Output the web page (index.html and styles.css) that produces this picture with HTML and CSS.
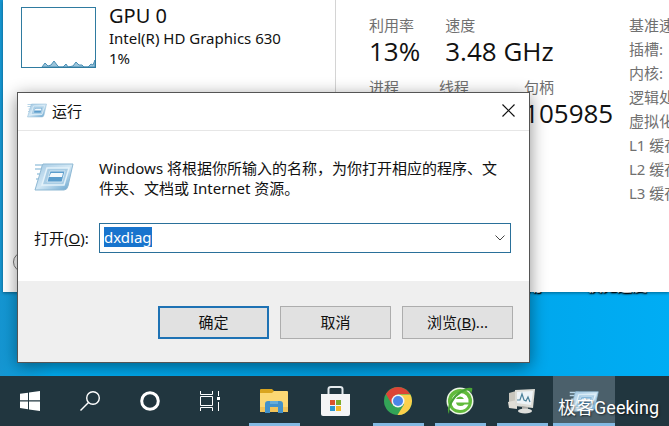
FILE: index.html
```
<!DOCTYPE html>
<html lang="zh-CN">
<head>
  <meta charset="UTF-8">
  <meta name="viewport" content="width=device-width, initial-scale=1">
  <title>运行</title>
  <link rel="stylesheet" href="styles.css">
</head>
<body>

<!-- shared gradient + icon for the run dialog -->
<svg class="defs" width="0" height="0" aria-hidden="true">
  <defs>
    <linearGradient id="runFill" x1="0" y1="0" x2="1" y2="1">
      <stop offset="0" stop-color="#9fc6e2"/>
      <stop offset="0.5" stop-color="#d3e8f5"/>
      <stop offset="1" stop-color="#5f9fcb"/>
    </linearGradient>
    <symbol id="run" viewBox="0 0 40 30">
      <path d="M1 3H13M1 7H11M3 12H9M2 17H8" stroke="#b9d6e8" stroke-width="2"/>
      <path d="M9 2H39L34 24Q33 28 30 28H1L7 8Q8 3 9 2Z" fill="url(#runFill)" stroke="#8fb9d4"/>
      <path d="M13 6H35L30 23H8Z" fill="#a9cde5" stroke="#e4f2fa" stroke-width="1.5"/>
      <path d="M16 9H31L28 20H13Z" fill="#5c9dcc" stroke="#cfe4f2"/>
      <path d="M17 11H29L28 15H15Z" fill="#f4f9fc"/>
    </symbol>
  </defs>
</svg>

<main class="desktop">
  <span class="desktop-label label-a">应用</span>
  <span class="desktop-label label-b">快充速度</span>

  <section class="task-manager">
    <aside class="sidebar">
      <svg class="gpu-graph" viewBox="0 0 75 61" aria-hidden="true">
        <path d="M21 60L24 56L27 59L30 58L33 54L36 58L38 60L42 60L45 57L47 60L52 59L55 55L58 58L61 58L63 60L67 60L70 57L72 58L74 53V60Z" fill="#9cc4da" stroke="#4a8fb5"/>
        <rect x="0.5" y="0.5" width="74" height="60" fill="none" stroke="#2f7ba0"/>
      </svg>
      <div class="gpu-info">
        <h2>GPU 0</h2>
        <p>Intel(R) HD Graphics 630</p>
        <p>1%</p>
      </div>
      <span class="toggle-circle"></span>
    </aside>
    <div class="cpu">
      <div class="stats">
        <dl class="stat-row">
          <div><dt>利用率</dt><dd>13%</dd></div>
          <div><dt>速度</dt><dd>3.48 GHz</dd></div>
        </dl>
        <dl class="stat-row second">
          <div><dt>进程</dt><dd></dd></div>
          <div><dt>线程</dt><dd></dd></div>
          <div><dt>句柄</dt><dd>105985</dd></div>
        </dl>
      </div>
      <ul class="specs">
        <li>基准速度:</li>
        <li>插槽:</li>
        <li>内核:</li>
        <li>逻辑处理器:</li>
        <li>虚拟化:</li>
        <li>L1 缓存:</li>
        <li>L2 缓存:</li>
        <li>L3 缓存:</li>
      </ul>
    </div>
  </section>

  <form class="run-dialog" onsubmit="return false">
    <header class="titlebar">
      <svg class="title-icon"><use href="#run"/></svg>
      <h1>运行</h1>
      <button type="button" class="close" aria-label="关闭">
        <svg viewBox="0 0 13 13"><path d="M0.5 0.5L12.5 12.5M12.5 0.5L0.5 12.5" stroke="#111" stroke-width="1.2"/></svg>
      </button>
    </header>
    <div class="dialog-body">
      <div class="message">
        <svg class="message-icon"><use href="#run"/></svg>
        <p>Windows 将根据你所输入的名称，为你打开相应的程序、文件夹、文档或 Internet 资源。</p>
      </div>
      <div class="open-row">
        <label for="command">打开(<u>O</u>):</label>
        <div class="combo">
          <input type="text" id="command" value="dxdiag" spellcheck="false" autocomplete="off">
          <button type="button" class="drop" aria-label="历史记录">
            <svg viewBox="0 0 10 6"><path d="M0.5 0.5L5 5L9.5 0.5" fill="none" stroke="#444"/></svg>
          </button>
        </div>
      </div>
    </div>
    <footer class="actions">
      <button type="submit" class="default">确定</button>
      <button type="button">取消</button>
      <button type="button">浏览(<u>B</u>)...</button>
    </footer>
  </form>
</main>

<nav class="taskbar">
  <div class="system">
    <button aria-label="开始">
      <svg width="20" height="20" viewBox="0 0 20 20" fill="#fff"><path d="M0 2.8L8 1.7V9.3H0ZM9 1.5L20 0V9.3H9ZM0 10.5H8V18.2L0 17.1ZM9 10.5H20V20L9 18.4Z"/></svg>
    </button>
    <button aria-label="搜索">
      <svg width="20" height="20" viewBox="0 0 20 20" fill="none" stroke="#fff" stroke-width="1.4"><circle cx="13" cy="7" r="6.3"/><path d="M8.5 11.5L0.5 19.5"/></svg>
    </button>
    <button aria-label="Cortana">
      <svg width="20" height="20" viewBox="0 0 20 20"><circle cx="10" cy="10" r="8.3" fill="none" stroke="#fff" stroke-width="3"/></svg>
    </button>
    <button aria-label="任务视图">
      <svg width="20" height="20" viewBox="0 0 20 20" fill="none" stroke="#fff"><path d="M0.5 0V3.5H12.5V0M0.5 5.5H12.5V14.5H0.5ZM0.5 20V16.5H12.5V20M18.5 0V5M18.5 11V20"/><path d="M17 6H20V9H17Z" fill="#fff" stroke="none"/></svg>
    </button>
  </div>
  <div class="apps">
    <button class="running" aria-label="文件资源管理器">
      <svg width="28" height="25" viewBox="0 0 28 25"><path d="M0 1Q0 0 1 0H12L14 2V5H0Z" fill="#d9a520"/><path d="M0 4H12L14 2H27Q28 2 28 3V23H0Z" fill="#fbd874"/><path d="M0 18H28V23H0Z" fill="#f2c459"/><path d="M5 24V15Q5 12 8 12H20Q23 12 23 15V24H18V18H10V24Z" fill="#4292cb"/><path d="M10 12H18V15H10Z" fill="#65acd9"/></svg>
    </button>
    <button aria-label="Microsoft Store">
      <svg width="30" height="30" viewBox="0 0 30 30"><path d="M7.500 9V3Q7.500 1 10 1H19Q21.500 1 21.500 3V9" fill="none" stroke="#e4eaee" stroke-width="2"/><path d="M0 8H29V28Q29 30 27 30H2Q0 30 0 28Z" fill="#f4f5f6"/><path d="M9 14H14V19H9Z" fill="#d9532c"/><path d="M15 14H20V19H15Z" fill="#7cac2b"/><path d="M9 20H14V25H9Z" fill="#2b98cf"/><path d="M15 20H20V25H15Z" fill="#f2b826"/></svg>
    </button>
    <button class="running" aria-label="Chrome">
      <svg width="28" height="28" viewBox="0 0 28 28"><circle cx="14" cy="14" r="14" fill="#33a457"/><path d="M1.900 7A14 14 0 0 1 26.100 7H14L8 17.500Z" fill="#dc4437"/><path d="M14 7.500H26.400A14 14 0 0 1 13.500 28L20 17.500Z" fill="#fcd04b"/><circle cx="14" cy="14" r="6.500" fill="#f2f4f6"/><circle cx="14" cy="14" r="5" fill="#4a86e8"/></svg>
    </button>
    <button class="running" aria-label="360浏览器">
      <svg width="28" height="28" viewBox="0 0 28 28"><circle cx="14" cy="14" r="13.500" fill="#eef7e8"/><circle cx="14" cy="14" r="12" fill="#62bb3c"/><path d="M22.500 15.500H10Q10.500 19 14.500 19Q17 19 18.500 17.500H22.500Q20 23 14 23Q5.500 22.500 5.500 14.500Q6 6.500 14 6Q23 6.500 22.500 15.500ZM10 12H18Q17 9.500 14 9.500Q11 9.500 10 12Z" fill="#fff"/><path d="M3 27Q-1 20 9 8Q19 -1 26 1Q27 2 25 7Q25 2 19 4Q10 8 5 18Q3 23 3 27Z" fill="#4aa536"/></svg>
    </button>
    <button class="running" aria-label="任务管理器">
      <svg width="28" height="26" viewBox="0 0 28 26"><path d="M1 5L8 3V20L1 18Z" fill="#c9c6bd"/><path d="M0 14L9 12V21L1 20Z" fill="#e1ded6"/><path d="M7 2L27 1L25 20L7 18Z" fill="#dcdcd6"/><path d="M9 4L25 3L23 17L9 15Z" fill="#edf3f7"/><path d="M9 12L12 12L14 6L16 12L18 13L20 9L22 14" fill="none" stroke="#4c8199" stroke-width="1.200"/><path d="M14 18L20 19V22H14Z" fill="#aaa9a4"/><ellipse cx="17" cy="23" rx="7" ry="2.500" fill="#dedfdc"/></svg>
    </button>
    <button class="running active" aria-label="运行">
      <svg class="task-run"><use href="#run"/></svg>
    </button>
  </div>
  <span class="watermark">极客Geeking</span>
</nav>

<script>
  // the dialog opens with the last command selected
  const command = document.getElementById("command");
  command.focus();
  command.select();
</script>
</body>
</html>
```
FILE: styles.css
```
* {
  box-sizing: border-box;
}
body {
  margin: 0;
  height: 100vh;
  display: flex;
  flex-direction: column;
  overflow: hidden;
  font-family: "Noto Sans", "Noto Sans CJK SC", sans-serif;
  font-size: 15px;
  line-height: 20px;
  color: #111;
}
h1, h2, p, dl, dd, ul {
  margin: 0;
  padding: 0;
  font-weight: normal;
}
button, input {
  font: inherit;
  color: inherit;
  padding: 0;
}
svg {
  display: block;
}
.defs {
  position: absolute;
}

/* desktop */
.desktop {
  flex: 1;
  position: relative;
  overflow: hidden;
  background: linear-gradient(90deg, #1696d2, #00adf2 8%, #009fe2 50%, #00adf4);
}
.desktop-label {
  position: absolute;
  top: 275px;
  line-height: 20px;
  color: #fff;
  text-shadow: 0 1px 2px #000, 1px 1px 1px #000;
}
.label-a {
  left: 512px;
}
.label-b {
  left: 587px;
}

/* task manager */
.task-manager {
  position: absolute;
  top: 0;
  left: 3px;
  right: 0;
  height: 292px;
  display: flex;
  background: #fff;
  box-shadow: 0 1px 3px rgba(0,0,0,0.4);
  overflow: hidden;
}
.sidebar {
  position: relative;
  flex: 0 0 333px;
  display: flex;
  align-items: flex-start;
  gap: 13px;
  padding: 4px 0 0 18px;
  border-right: 1px solid #d4d4d4;
}
.gpu-graph {
  width: 75px;
  height: 61px;
  margin-top: 3px;
}
.gpu-info h2 {
  font-size: 20px;
  line-height: 24px;
}
.toggle-circle {
  position: absolute;
  left: 10px;
  top: 252px;
  width: 20px;
  height: 20px;
  border: 1px solid #777;
  border-radius: 50%;
}
.cpu {
  flex: 1;
  display: flex;
  padding: 13px 0 0 33px;
  white-space: nowrap;
}
.stats {
  flex: 0 0 260px;
}
.stat-row {
  display: flex;
  gap: 25px;
  height: 62px;
}
.second {
  gap: 40px;
}
.second div:last-child {
  margin-left: 15px;
}
dt {
  line-height: 24px;
  color: #707070;
}
dd {
  font-family: "Open Sans", sans-serif;
  font-size: 26px;
  line-height: 28px;
}
.specs {
  list-style: none;
  line-height: 24px;
  color: #707070;
}

/* run dialog */
.run-dialog {
  position: absolute;
  top: 92px;
  left: 17px;
  right: 139px;
  border: 1px solid #555;
  background: #fff;
  box-shadow: 0 4px 16px rgba(0,0,0,0.45);
}
.titlebar {
  display: flex;
  align-items: center;
  gap: 5px;
  height: 38px;
  padding: 0 14px 2px 9px;
  border-bottom: 1px solid #e6e6e6;
}
.title-icon {
  width: 20px;
  height: 15px;
}
.titlebar h1 {
  flex: 1;
  font-size: 15px;
}
.close {
  border: none;
  background: none;
}
.close svg {
  width: 13px;
  height: 13px;
}
.dialog-body {
  padding: 27px 18px 28px 16px;
}
.message {
  display: flex;
  gap: 25px;
}
.message-icon {
  flex: none;
  width: 40px;
  height: 30px;
  margin-top: 4px;
}
.open-row {
  display: flex;
  align-items: center;
  margin-top: 25px;
}
.open-row label {
  flex: 0 0 65px;
  white-space: nowrap;
}
.combo {
  flex: 1;
  display: flex;
  height: 30px;
  border: 1px solid #2a709a;
}
.combo input {
  flex: 1;
  min-width: 0;
  padding: 0 0 2px 4px;
  border: none;
  outline: none;
  background: none;
}
.combo input::selection {
  background: #1874cd;
  color: #fff;
}
.drop {
  width: 20px;
  border: none;
  background: none;
}
.drop svg {
  width: 10px;
  height: 6px;
  margin: auto;
}
.actions {
  display: flex;
  justify-content: flex-end;
  gap: 11px;
  padding: 25px 16px 23px;
  background: #efefef;
}
.actions button {
  width: 111px;
  height: 33px;
  padding-bottom: 2px;
  border: 1px solid #adadad;
  background: #e1e1e1;
}
.actions .default {
  border: 2px solid #1e72b4;
}

/* taskbar */
.taskbar {
  position: relative;
  flex: 0 0 50px;
  display: flex;
  gap: 3px;
  background: #21363f;
}
.system, .apps {
  display: flex;
}
.taskbar button {
  width: 62px;
  display: flex;
  align-items: center;
  justify-content: center;
  border: none;
  background: none;
}
.taskbar .system button {
  width: 60px;
}
.running {
  position: relative;
}
.running::after {
  content: "";
  position: absolute;
  left: 6px;
  right: 5px;
  bottom: 0;
  height: 3px;
  background: #83b9e2;
}
.taskbar .active {
  background: #4b606b;
}
.active::after {
  left: 0;
  right: 0;
}
.task-run {
  width: 30px;
  height: 23px;
}
.watermark {
  position: absolute;
  right: 10px;
  bottom: 8px;
  font-family: "Roboto", "Noto Sans CJK SC", sans-serif;
  font-size: 18px;
  line-height: 20px;
  color: #fff;
  text-shadow: 1px 1px 2px rgba(0,0,0,0.6);
}
```
